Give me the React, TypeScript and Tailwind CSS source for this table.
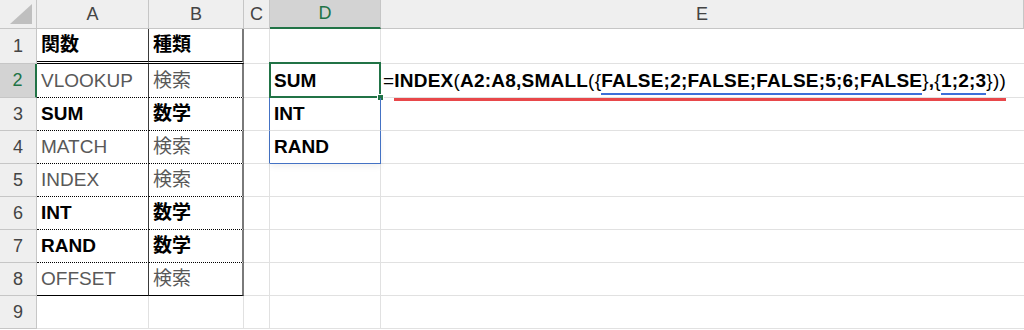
import React from 'react';

const font = { fontFamily: '"Liberation Sans", "Noto Sans CJK JP", sans-serif' };

const cols = ['A', 'B', 'C', 'D', 'E'];

const rows = [
    { a: '関数', b: '種類', bold: true },
    { a: 'VLOOKUP', b: '検索', bold: false },
    { a: 'SUM', b: '数学', bold: true },
    { a: 'MATCH', b: '検索', bold: false },
    { a: 'INDEX', b: '検索', bold: false },
    { a: 'INT', b: '数学', bold: true },
    { a: 'RAND', b: '数学', bold: true },
    { a: 'OFFSET', b: '検索', bold: false },
    { a: '', b: '', bold: false },
];

const heights = ['h-[35px]', 'h-[34px]', 'h-[33px]', 'h-[33px]', 'h-[33px]', 'h-[33px]', 'h-[33px]', 'h-[33px]', 'h-[33px]'];

function Formula() {
    return (
        <span className="text-black text-[19px] font-bold tracking-[0.22px]">
            <span className="font-normal">=</span>
            <span className="pb-[7px] border-b-[3px] border-[#e8474a]">
                INDEX<span className="font-normal">(</span>A2:A8,SMALL<span className="font-normal">({"{"}</span>
                <span className="pb-[2px] border-b-2 border-[#3c6fd9]">FALSE;2;FALSE;FALSE;5;6;FALSE</span>
                <span className="font-normal">{"}"}</span>,<span className="font-normal">{"{"}</span>
                <span className="pb-[2px] border-b-2 border-[#3c6fd9]">1;2;3</span>
                <span className="font-normal">{"}))"}</span>
            </span>
        </span>
    );
}

export default function App() {
    return (
        <div className="w-[1024px] h-[330px] overflow-hidden bg-white" style={font}>
            <div className="grid grid-cols-[37px_112px_95px_26px_111px_1fr]">
                {/* header row */}
                <div className="h-[29px] bg-[#efefef] border-r border-b border-[#c6c6c6] flex items-end justify-end p-[4px]">
                    <svg width="22" height="20" viewBox="0 0 22 20">
                        <polygon points="22,0 22,20 0,20" fill="#bfbfbf" />
                    </svg>
                </div>
                {cols.map((c) => (
                    <div
                        key={c}
                        className={
                            c === 'D'
                                ? 'h-[29px] bg-[#d3d3d3] border-r border-r-[#c6c6c6] border-b-2 border-b-[#217346] flex items-center justify-center text-[18px] text-[#217346]'
                                : 'h-[29px] bg-[#efefef] border-r border-b border-[#c6c6c6] flex items-center justify-center text-[18px] text-[#444]'
                        }
                    >
                        {c}
                    </div>
                ))}

                {rows.map((r, i) => {
                    const n = i + 1;
                    const h = heights[i];
                    const inTable = n <= 8;
                    // bottom border of the A:B table
                    let tb = 'border-b border-b-[#e1e1e1]';
                    if (n === 1) tb = 'border-b-[3px] [border-bottom-style:double] border-b-black';
                    else if (n >= 2 && n <= 7) tb = 'border-b [border-bottom-style:dotted] border-b-black';
                    else if (n === 8) tb = 'border-b border-b-black';
                    const txt = r.bold ? 'font-bold text-black' : 'text-[#595959]';
                    return (
                        <React.Fragment key={n}>
                            <div
                                className={
                                    n === 2
                                        ? `${h} bg-[#d3d3d3] border-r-2 border-r-[#217346] border-b border-b-[#c6c6c6] flex items-center justify-center text-[18px] text-[#217346]`
                                        : `${h} bg-[#efefef] border-r border-b border-[#c6c6c6] flex items-center justify-center text-[18px] text-[#444]`
                                }
                            >
                                {n}
                            </div>
                            <div className={`${h} border-r ${inTable ? 'border-r-[#3a3a3a]' : 'border-r-[#e1e1e1]'} ${tb} flex items-center px-[4px] pt-[1px] text-[19px] whitespace-nowrap ${txt}`}>
                                {r.a}
                            </div>
                            <div className={`${h} ${inTable ? 'border-r-2 border-r-[#7a7a7a]' : 'border-r border-r-[#e1e1e1]'} ${tb} flex items-center px-[4px] pt-[1px] text-[19px] whitespace-nowrap ${txt}`}>
                                {r.b}
                            </div>
                            <div className={`${h} border-r ${n === 3 || n === 4 ? 'border-r-[#4472c4]' : 'border-r-[#e1e1e1]'} border-b border-b-[#e1e1e1]`} />
                            <div
                                className={`${h} relative border-r ${n >= 2 && n <= 4 ? 'border-r-[#4472c4]' : 'border-r-[#e1e1e1]'} border-b ${n === 4 ? 'border-b-[#4472c4]' : 'border-b-[#e1e1e1]'} ${n === 4 ? 'shadow-[0_3px_6px_rgba(0,0,0,0.06)]' : ''} flex items-center px-[4px] pt-[1px] text-[19px] font-bold text-black whitespace-nowrap`}
                            >
                                {n === 2 && 'SUM'}
                                {n === 3 && 'INT'}
                                {n === 4 && 'RAND'}
                                {n === 2 && (
                                    <>
                                        <div className="absolute -top-[2px] -left-[1px] -right-[1px] -bottom-[1px] border-2 border-[#217346]" />
                                        <div className="absolute -right-[4px] -bottom-[4px] w-[7px] h-[7px] bg-[#217346] border border-white" />
                                    </>
                                )}
                            </div>
                            <div className={`${h} border-b border-b-[#e1e1e1] flex items-center pl-[2px] pt-[1px] whitespace-nowrap`}>
                                {n === 2 && <Formula />}
                            </div>
                        </React.Fragment>
                    );
                })}
            </div>
        </div>
    );
}
